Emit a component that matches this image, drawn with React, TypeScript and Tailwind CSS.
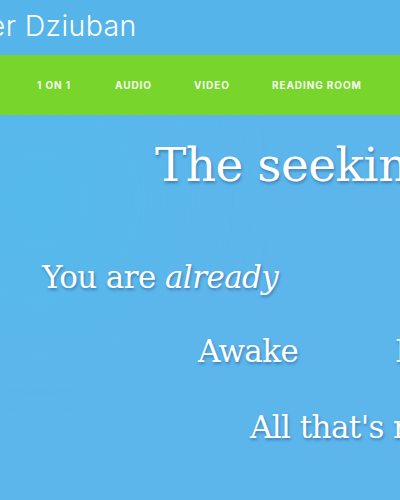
const navItems = ["1 On 1", "Audio", "Video", "Reading Room"];

const shadow = "[text-shadow:1px_2px_3px_rgba(20,60,110,0.45)]";

export default function App() {
  return (
    <div className="relative h-[500px] w-[400px] overflow-hidden bg-[#5cb6ec] text-white">
      {/* soft light patch on the left */}
      <div className="pointer-events-none absolute left-[-60px] top-[100px] h-[200px] w-[200px] rounded-full bg-[#4fbdeb] opacity-60 blur-3xl" />

      <div className="relative">
        {/* site title */}
        <div className="h-[55px] bg-[#55b4e9]">
          <div className="ml-[-55px] whitespace-nowrap pt-[9px] font-['Inter',sans-serif] text-[28.5px] font-light leading-[34px] tracking-[0.4px]">
            Peter Dziuban
          </div>
        </div>

        {/* nav */}
        <nav className="flex h-[60px] items-center bg-[#77d52b] pl-[37px] font-['Inter',sans-serif] text-[10px] font-bold uppercase tracking-[0.9px] text-[#f6fbef]">
          <span className="w-[78px]">{navItems[0]}</span>
          <span className="w-[79px]">{navItems[1]}</span>
          <span className="w-[78px]">{navItems[2]}</span>
          <span className="whitespace-nowrap">{navItems[3]}</span>
        </nav>

        {/* hero copy */}
        <div className={`whitespace-nowrap font-['DejaVu_Serif',serif] font-light ${shadow}`}>
          <h1 className="pl-[155px] pt-[22px] text-[47px] leading-[56px] tracking-[-0.5px]">
            The seeking is over
          </h1>
          <p className="pl-[42px] pt-[64px] text-[31px] leading-[40px] tracking-[-0.6px]">
            You are <em>already</em>
          </p>
          <div className="flex pl-[198px] pt-[34px] text-[31px] leading-[40px] tracking-[-0.6px]">
            <span className="w-[197px] shrink-0">Awake</span>
            <span className="shrink-0">Free</span>
          </div>
          <p className="pl-[250px] pt-[36px] text-[31px] leading-[40px] tracking-[-0.6px]">
            All that's needed
          </p>
        </div>
      </div>
    </div>
  );
}
